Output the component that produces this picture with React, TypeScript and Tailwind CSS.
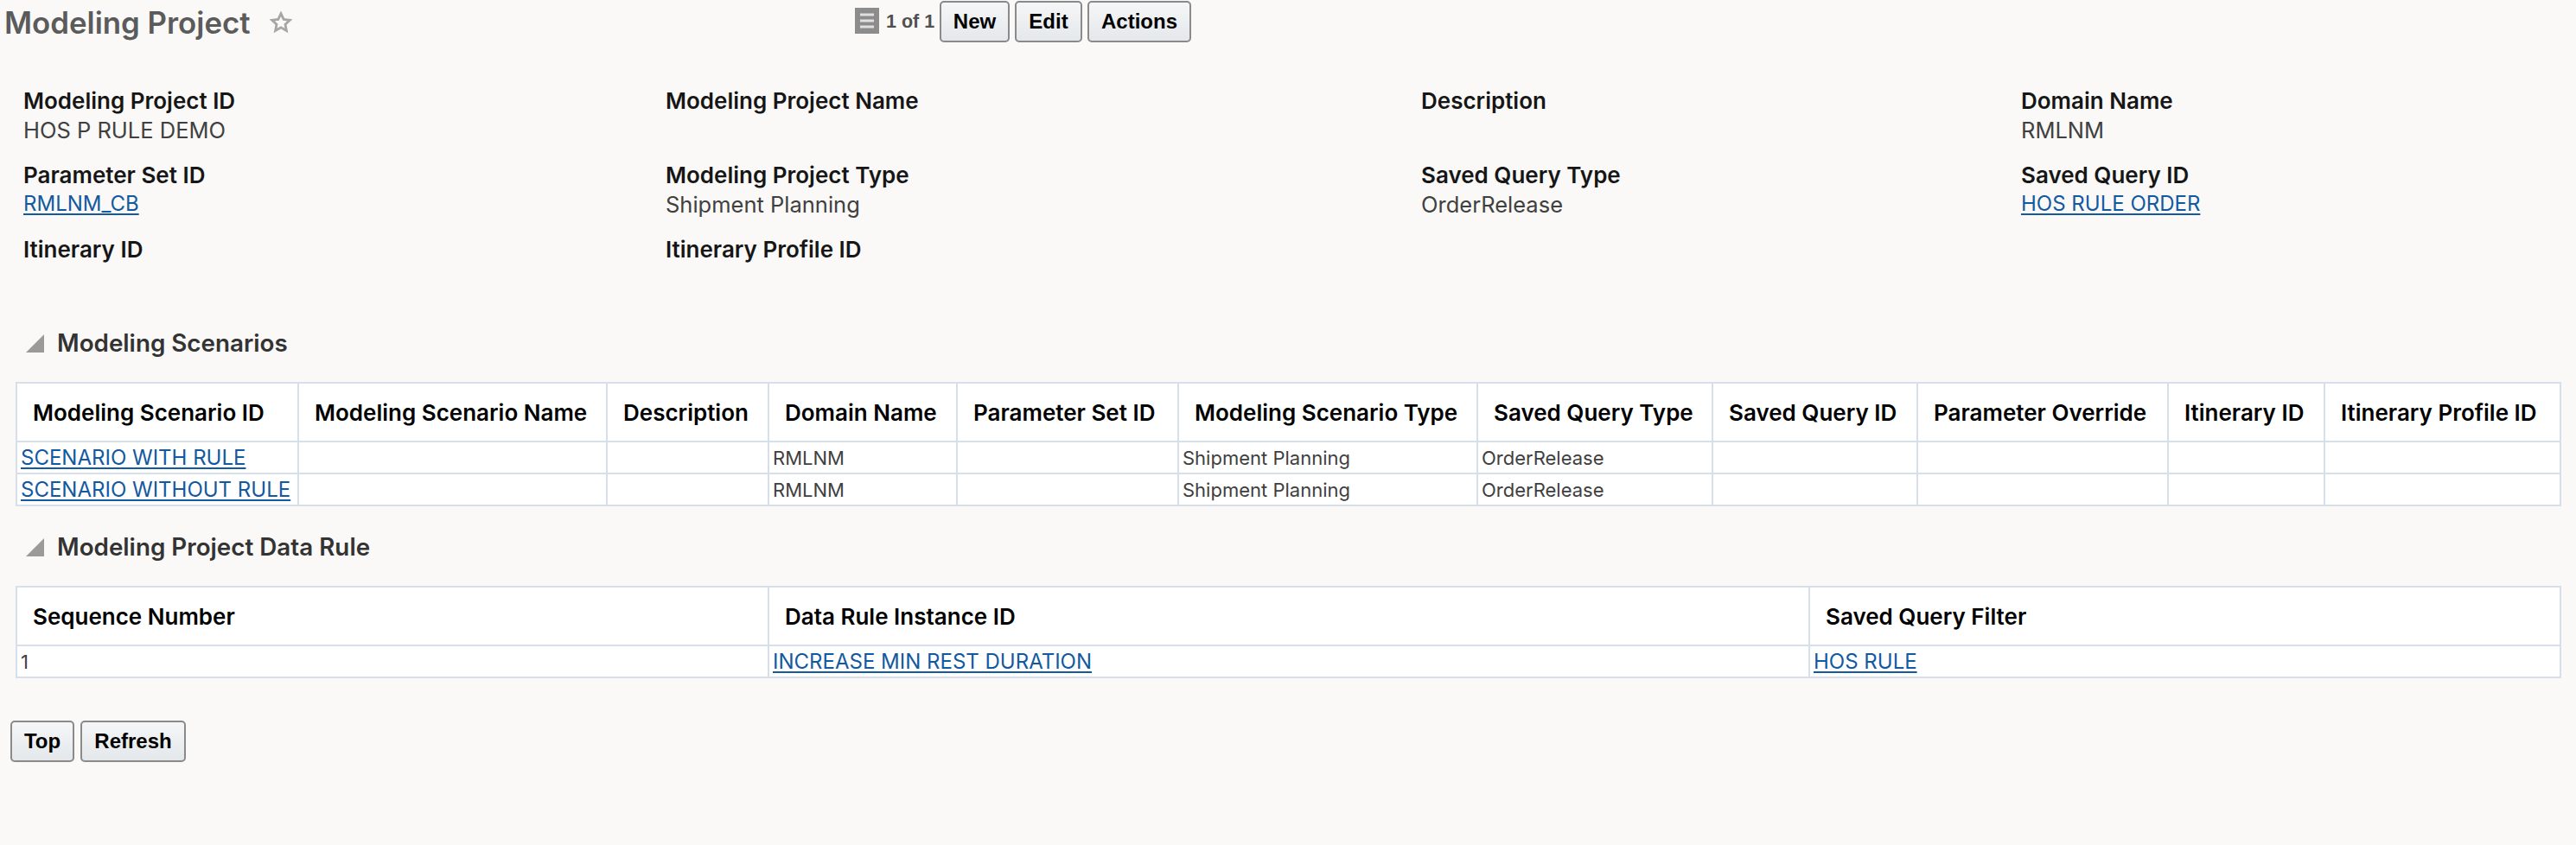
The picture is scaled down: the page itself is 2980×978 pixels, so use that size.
const Link = ({ children }: { children: string }) => (
  <a className="text-[24px] text-[#13599f] underline decoration-2 underline-offset-[3px]">{children}</a>
)

const fields = [
  { label: "Modeling Project ID", value: "HOS P RULE DEMO" },
  { label: "Modeling Project Name" },
  { label: "Description" },
  { label: "Domain Name", value: "RMLNM" },
  { label: "Parameter Set ID", link: "RMLNM_CB" },
  { label: "Modeling Project Type", value: "Shipment Planning" },
  { label: "Saved Query Type", value: "OrderRelease" },
  { label: "Saved Query ID", link: "HOS RULE ORDER" },
  { label: "Itinerary ID" },
  { label: "Itinerary Profile ID" },
]

const scenarioCols = [
  { name: "Modeling Scenario ID", w: "w-[326px]" },
  { name: "Modeling Scenario Name", w: "w-[357px]" },
  { name: "Description", w: "w-[187px]" },
  { name: "Domain Name", w: "w-[218px]" },
  { name: "Parameter Set ID", w: "w-[256px]" },
  { name: "Modeling Scenario Type", w: "w-[346px]" },
  { name: "Saved Query Type", w: "w-[272px]" },
  { name: "Saved Query ID", w: "w-[237px]" },
  { name: "Parameter Override", w: "w-[290px]" },
  { name: "Itinerary ID", w: "w-[181px]" },
  { name: "Itinerary Profile ID", w: "w-[273px]" },
]

const scenarios = ["SCENARIO WITH RULE", "SCENARIO WITHOUT RULE"]

const ruleCols = [
  { name: "Sequence Number", w: "w-[870px]" },
  { name: "Data Rule Instance ID", w: "w-[1204px]" },
  { name: "Saved Query Filter", w: "w-[869px]" },
]

const Th = ({ children }: { children: string }) => (
  <th className="h-[68px] border-2 border-[#d6dfea] bg-white px-[18px] text-left align-middle text-[26px] font-semibold text-black whitespace-nowrap">
    {children}
  </th>
)

const Td = ({ children }: { children?: React.ReactNode }) => (
  <td className="h-[37px] border-2 border-[#d6dfea] bg-white px-[4px] text-[22px] leading-[28px] text-[#404040] whitespace-nowrap">
    {children}
  </td>
)

const Triangle = () => (
  <svg width="23" height="23" viewBox="0 0 23 23" className="shrink-0">
    <path d="M22 1V22H1Z" fill="#9a9a9a" />
  </svg>
)

const SectionHeader = ({ title, className }: { title: string; className: string }) => (
  <div className={`flex items-center gap-[14px] pl-[29px] ${className}`}>
    <Triangle />
    <h2 className="text-[27.8px] font-semibold text-[#333333] leading-[34px]">{title}</h2>
  </div>
)

const Btn = ({ children, className }: { children: string; className: string }) => (
  <button className={`h-[48px] rounded-[5px] border-2 border-[#8a8a8a] bg-gradient-to-b from-[#f5f6f7] to-[#e4e8eb] font-['Liberation_Sans',sans-serif] text-[24px] font-bold text-black ${className}`}>
    {children}
  </button>
)

export default function App() {
  return (
    <div className="min-h-screen bg-[#faf9f7] font-['Inter',sans-serif] text-[#404040]">
      <div className="flex h-[50px] items-start">
        <div className="flex w-[989px] items-center pl-[5px] pt-[3px]">
          <h1 className="text-[34.8px] font-semibold leading-[46px] text-[#5b5b5b]">Modeling Project</h1>
          <svg width="26" height="26" viewBox="0 0 24 24" className="ml-[22px]" fill="none" stroke="#a6a6a6" strokeWidth="2.6">
            <path d="M12 2.5l2.9 6.2 6.6.8-4.9 4.6 1.3 6.6-5.9-3.3-5.9 3.3 1.3-6.6L2.5 9.5l6.6-.8z" />
          </svg>
        </div>
        <svg width="28" height="30" viewBox="0 0 28 30" className="mt-[9px] shrink-0">
          <rect width="28" height="30" fill="#8c8c8c" />
          <path d="M6 8h16M6 15h16M6 22h16" stroke="#e0e0e0" strokeWidth="3" />
        </svg>
        <span className="ml-[8px] mt-[11px] w-[62px] font-['Liberation_Sans',sans-serif] text-[21.5px] font-bold leading-[28px] text-[#505050]">1 of 1</span>
        <div className="flex gap-[6px] pt-[1px]">
          <Btn className="w-[81px]">New</Btn>
          <Btn className="w-[78px]">Edit</Btn>
          <Btn className="w-[120px]">Actions</Btn>
        </div>
      </div>

      <div className="mt-[50px] grid grid-cols-[743px_874px_694px_1fr] pl-[27px]">
        {fields.map((f) => (
          <div key={f.label} className="h-[86px]">
            <div className="text-[26px] font-semibold leading-[34px] text-[#161616]">{f.label}</div>
            <div className={`text-[25.5px] leading-[34px] text-[#404040] ${f.link ? "-mt-[2px]" : ""}`}>
              {f.link ? <Link>{f.link}</Link> : f.value}
            </div>
          </div>
        ))}
      </div>

      <SectionHeader title="Modeling Scenarios" className="mt-[22px]" />
      <div className="mt-[28px] pl-[18px]">
        <table className="w-[2943px] table-fixed border-collapse">
          <colgroup>
            {scenarioCols.map((c) => (
              <col key={c.name} className={c.w} />
            ))}
          </colgroup>
          <thead>
            <tr>
              {scenarioCols.map((c) => (
                <Th key={c.name}>{c.name}</Th>
              ))}
            </tr>
          </thead>
          <tbody>
            {scenarios.map((s) => (
              <tr key={s}>
                <Td><Link>{s}</Link></Td>
                <Td />
                <Td />
                <Td>RMLNM</Td>
                <Td />
                <Td>Shipment Planning</Td>
                <Td>OrderRelease</Td>
                <Td />
                <Td />
                <Td />
                <Td />
              </tr>
            ))}
          </tbody>
        </table>
      </div>

      <SectionHeader title="Modeling Project Data Rule" className="mt-[30px]" />
      <div className="mt-[28px] pl-[18px]">
        <table className="w-[2943px] table-fixed border-collapse">
          <colgroup>
            {ruleCols.map((c) => (
              <col key={c.name} className={c.w} />
            ))}
          </colgroup>
          <thead>
            <tr>
              {ruleCols.map((c) => (
                <Th key={c.name}>{c.name}</Th>
              ))}
            </tr>
          </thead>
          <tbody>
            <tr>
              <Td>1</Td>
              <Td><Link>INCREASE MIN REST DURATION</Link></Td>
              <Td><Link>HOS RULE</Link></Td>
            </tr>
          </tbody>
        </table>
      </div>

      <div className="mt-[49px] flex gap-[7px] pl-[12px]">
        <Btn className="w-[74px]">Top</Btn>
        <Btn className="w-[122px]">Refresh</Btn>
      </div>
    </div>
  )
}
